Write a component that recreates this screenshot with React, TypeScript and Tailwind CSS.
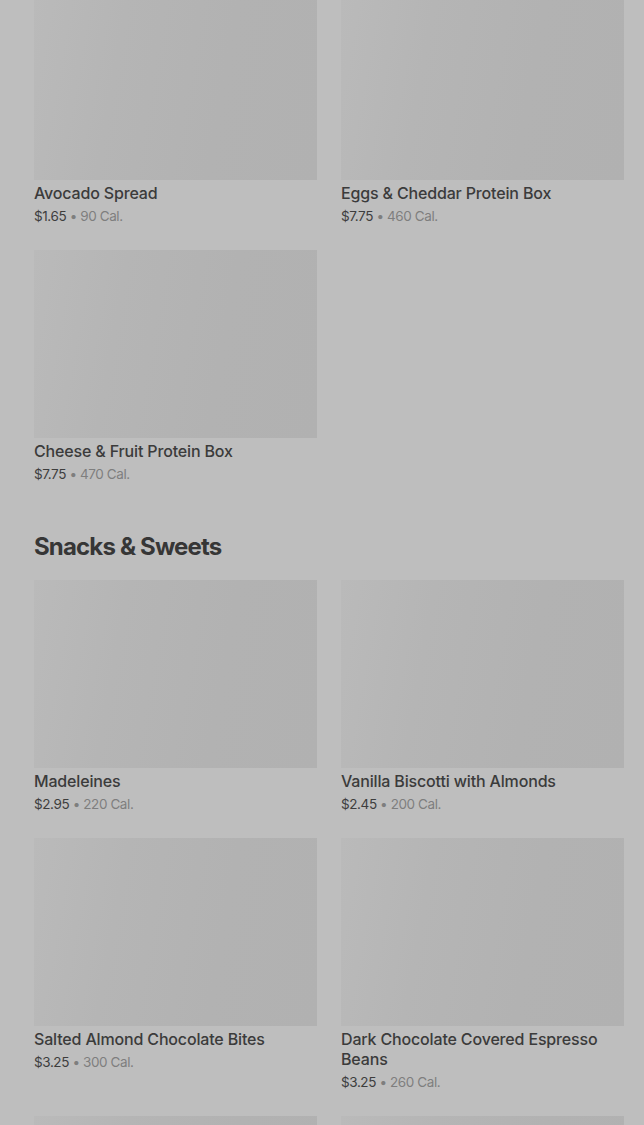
import React from "react";

interface Item {
  name: string;
  price: string;
  cal: string;
}

const topItems: Item[] = [
  { name: "Avocado Spread", price: "$1.65", cal: "90 Cal." },
  { name: "Eggs & Cheddar Protein Box", price: "$7.75", cal: "460 Cal." },
  { name: "Cheese & Fruit Protein Box", price: "$7.75", cal: "470 Cal." },
];

const snacks: Item[] = [
  { name: "Madeleines", price: "$2.95", cal: "220 Cal." },
  { name: "Vanilla Biscotti with Almonds", price: "$2.45", cal: "200 Cal." },
  { name: "Salted Almond Chocolate Bites", price: "$3.25", cal: "300 Cal." },
  { name: "Dark Chocolate Covered Espresso Beans", price: "$3.25", cal: "260 Cal." },
  { name: "", price: "", cal: "" },
  { name: "", price: "", cal: "" },
];

function ItemCard({ item }: { item: Item }) {
  return (
    <div className="flex flex-col">
      <div className="h-[188px] w-full bg-[linear-gradient(100deg,#bababa_0%,#b5b5b5_30%,#b2b2b2_65%,#b1b1b1_100%)]" />
      {item.name && (
        <>
          <div className="mt-[3px] text-base leading-5 font-medium tracking-[-0.01em] text-[#3b3b3b]">
            {item.name}
          </div>
          <div className="mt-[3px] text-[13.5px] leading-5 tracking-[-0.03em] text-[#3d3d3d]">
            {item.price}
            <span className="text-[#7e7e7e]"> • {item.cal}</span>
          </div>
        </>
      )}
    </div>
  );
}

export default function App() {
  return (
    <div
      className="h-[1125px] overflow-hidden bg-[#bebebe] pl-[34px] pr-5"
      style={{ fontFamily: "Inter, 'Noto Sans', sans-serif" }}
    >
      <div className="-mt-2 grid grid-cols-2 gap-6">
        {topItems.map((item, i) => (
          <ItemCard key={i} item={item} />
        ))}
      </div>

      <h2 className="mt-[47px] text-2xl leading-8 font-bold tracking-[-0.035em] text-[#363636]">
        Snacks &amp; Sweets
      </h2>

      <div className="mt-[17px] grid grid-cols-2 gap-6">
        {snacks.map((item, i) => (
          <ItemCard key={i} item={item} />
        ))}
      </div>
    </div>
  );
}
